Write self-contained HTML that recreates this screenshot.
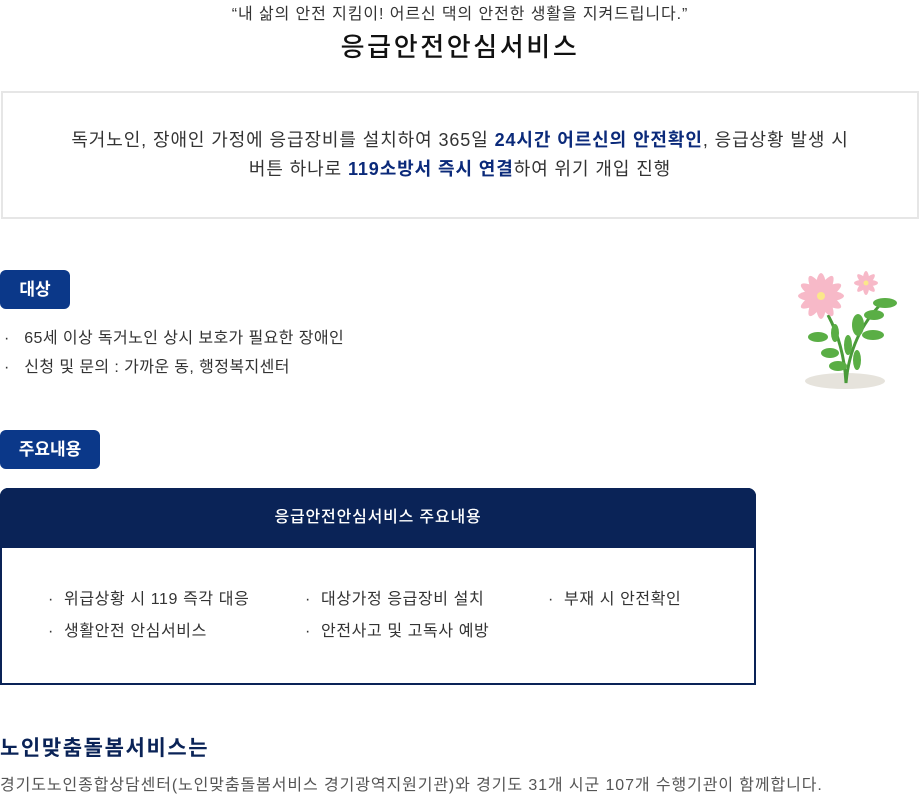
<!DOCTYPE html><html><head><meta charset="utf-8"><style>
*{margin:0;padding:0;box-sizing:border-box}
body{width:920px;height:795px;background:#fff;font-family:"Liberation Sans","Noto Sans CJK KR",sans-serif;color:#333;position:relative;overflow:hidden}
.a{position:absolute;white-space:nowrap}
.badge{position:absolute;background:#0b3889;color:#fff;font-weight:bold;font-size:17px;border-radius:6px;text-align:center;line-height:39px;height:39px}
b.n{color:#0b2a7a}
</style></head><body>
<div class="a" style="left:0;width:920px;text-align:center;top:0;font-size:16px;color:#333;letter-spacing:0.9px">“내 삶의 안전 지킴이! 어르신 댁의 안전한 생활을 지켜드립니다.”</div>
<div class="a" style="left:0;width:920px;text-align:center;top:27px;font-size:26px;color:#111;font-weight:500;letter-spacing:2.6px">응급안전안심서비스</div>
<div class="a" style="left:1px;top:91px;width:918px;height:128px;border:2px solid #e6e6e6"></div>
<div class="a" style="left:0;width:920px;text-align:center;top:126px;font-size:18px;line-height:29px;color:#333;letter-spacing:0.9px">독거노인, 장애인 가정에 응급장비를 설치하여 365일 <b class="n">24시간 어르신의 안전확인</b>, 응급상황 발생 시<br>버튼 하나로 <b class="n">119소방서 즉시 연결</b>하여 위기 개입 진행</div>
<div class="badge" style="left:0;top:270px;width:70px">대상</div>
<div class="a" style="left:4px;top:324px;font-size:16px;line-height:29px;letter-spacing:0.4px">·&nbsp;&nbsp; 65세 이상 독거노인 상시 보호가 필요한 장애인<br>·&nbsp;&nbsp; 신청 및 문의 : 가까운 동, 행정복지센터</div>
<svg class="a" style="left:790px;top:265px" width="110" height="130" viewBox="0 0 110 130">
<ellipse cx="55" cy="116" rx="40" ry="8" fill="#e6e3dc"/>
<path d="M56 118 Q54 80 38 50 M56 118 Q60 70 92 38" stroke="#4a9a3a" stroke-width="3" fill="none"/>
<g fill="#5aae45"><ellipse cx="28" cy="72" rx="10" ry="5"/><ellipse cx="45" cy="68" rx="4" ry="9"/><ellipse cx="40" cy="88" rx="9" ry="5"/><ellipse cx="58" cy="80" rx="4" ry="10"/><ellipse cx="48" cy="101" rx="9" ry="5"/><ellipse cx="67" cy="95" rx="4" ry="10"/><ellipse cx="68" cy="60" rx="6" ry="11"/><ellipse cx="83" cy="70" rx="11" ry="5"/><ellipse cx="84" cy="50" rx="10" ry="5"/><ellipse cx="95" cy="38" rx="12" ry="5"/></g>
<g fill="#f7b9c8" transform="translate(31,31)"><ellipse rx="23" ry="6"/><ellipse rx="23" ry="6" transform="rotate(30)"/><ellipse rx="23" ry="6" transform="rotate(60)"/><ellipse rx="23" ry="6" transform="rotate(90)"/><ellipse rx="23" ry="6" transform="rotate(120)"/><ellipse rx="23" ry="6" transform="rotate(150)"/><circle r="10"/></g>
<circle cx="31" cy="31" r="4" fill="#fbe78a"/>
<g fill="#f7b9c8" transform="translate(76,18)"><ellipse rx="12" ry="3.5"/><ellipse rx="12" ry="3.5" transform="rotate(45)"/><ellipse rx="12" ry="3.5" transform="rotate(90)"/><ellipse rx="12" ry="3.5" transform="rotate(135)"/><circle r="6"/></g>
<circle cx="76" cy="18" r="2.5" fill="#fbe78a"/>
</svg>
<div class="badge" style="left:0;top:430px;width:100px">주요내용</div>
<div class="a" style="left:0;top:488px;width:756px;height:197px;border:2px solid #0a2357;border-radius:8px 8px 0 0"></div>
<div class="a" style="left:0;top:488px;width:756px;height:60px;background:#0a2357;border-radius:8px 8px 0 0;color:#fff;text-align:center;line-height:60px;font-size:16px;font-weight:500;letter-spacing:0.8px">응급안전안심서비스 주요내용</div>
<div class="a" style="left:48px;top:584px;font-size:16px;line-height:32px;letter-spacing:0.6px">·&nbsp; 위급상황 시 119 즉각 대응<br>·&nbsp; 생활안전 안심서비스</div>
<div class="a" style="left:305px;top:584px;font-size:16px;line-height:32px;letter-spacing:0.6px">·&nbsp; 대상가정 응급장비 설치<br>·&nbsp; 안전사고 및 고독사 예방</div>
<div class="a" style="left:548px;top:584px;font-size:16px;line-height:32px;letter-spacing:0.6px">·&nbsp; 부재 시 안전확인</div>
<div class="a" style="left:0;top:732px;font-size:21px;font-weight:bold;color:#0a2357;letter-spacing:1.6px">노인맞춤돌봄서비스는</div>
<div class="a" style="left:0;top:771px;font-size:16px;color:#555;letter-spacing:0.9px">경기도노인종합상담센터(노인맞춤돌봄서비스 경기광역지원기관)와 경기도 31개 시군 107개 수행기관이 함께합니다.</div>
</body></html>
